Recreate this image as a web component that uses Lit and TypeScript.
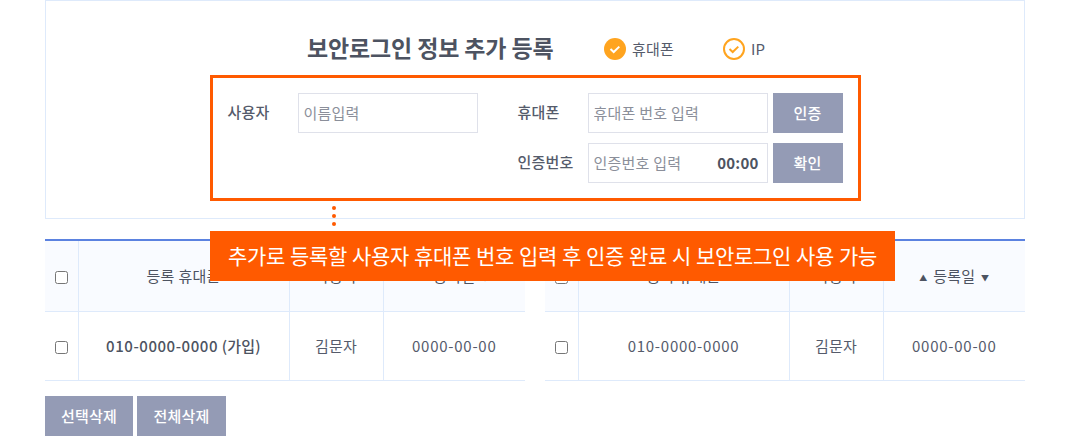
import {LitElement, html, css} from 'lit';
import {customElement} from 'lit/decorators.js';

const check = (filled: boolean) => html`
  <svg class="check" width="22" height="22" viewBox="0 0 22 22">
    <circle cx="11" cy="11" r=${filled ? 11 : 10} fill=${filled ? '#ffa41f' : '#fff'}
      stroke="#ffa41f" stroke-width=${filled ? 0 : 2}></circle>
    <path d="M6.5 11l3.2 3 5.6-5.4" fill="none" stroke=${filled ? '#fff' : '#ffa41f'} stroke-width="2"></path>
  </svg>
`;

@customElement('app-root')
export class AppRoot extends LitElement {
  static styles = css`
    :host {
      display: block;
      position: relative;
      height: 436px;
      overflow: hidden;
      padding: 0 45px;
      box-sizing: border-box;
      background: #fff;
      color: #555b6b;
      font-family: 'Noto Sans CJK KR', 'Noto Sans', sans-serif;
      font-size: 15px;
      letter-spacing: 0.2px;
      word-spacing: 0.24px;
    }

    .panel {
      height: 219px;
      box-sizing: border-box;
      border: 1px solid #deeafb;
      display: flex;
      flex-direction: column;
      align-items: center;
    }

    .head {
      height: 74px;
      box-sizing: border-box;
      padding-top: 22px;
      width: 100%;
      display: flex;
      align-items: center;
    }

    .title {
      margin-left: 261px;
      width: 297px;
      font-size: 23px;
      font-weight: 700;
      letter-spacing: -0.14px;
      word-spacing: 0;
      line-height: 36px;
      color: #4d5361;
      margin-bottom: 4px;
    }

    .option {
      display: flex;
      align-items: center;
      gap: 6px;
      width: 119px;
      line-height: 22px;
      color: #555b6b;
    }

    .form {
      width: 651px;
      height: 126px;
      box-sizing: border-box;
      border: 3px solid #ff5a00;
      padding: 15px;
      display: grid;
      grid-template-columns: 70px 180px 40px 70px 180px 75px;
      grid-auto-rows: 40px;
      row-gap: 10px;
      align-items: center;
    }

    .label {
      font-weight: 500;
      color: #555b6b;
      margin-top: -3px;
    }

    .field {
      height: 40px;
      box-sizing: border-box;
      border: 1px solid #dfe1ea;
      display: flex;
      align-items: center;
      padding: 0 8px 2px 4px;
    }

    .field input {
      flex: 1;
      min-width: 0;
      border: 0;
      padding: 0 0 0 1px;
      outline: none;
      font: inherit;
      letter-spacing: inherit;
      word-spacing: inherit;
      color: inherit;
    }

    .field input::placeholder {
      color: #8b8f9a;
      opacity: 1;
    }

    .timer {
      font-weight: 700;
      letter-spacing: 0.2px;
      color: #4d5361;
    }

    button {
      border: 0;
      padding: 0 0 2px;
      height: 40px;
      background: #949bb5;
      color: #fff;
      font: inherit;
      font-weight: 500;
      letter-spacing: inherit;
    }

    .form button {
      width: 70px;
      margin-left: 5px;
    }

    .spacer {
      grid-column: 1 / span 3;
    }

    .tables {
      margin-top: 20px;
      display: grid;
      grid-template-columns: 480px 480px;
      column-gap: 20px;
      height: 142px;
      position: relative;
    }

    table {
      width: 480px;
      border-collapse: collapse;
      table-layout: fixed;
      border-top: 2px solid #5b82e0;
    }

    th,
    td {
      padding: 0 0 2px;
      text-align: center;
      font-weight: 400;
      border-left: 1px solid #deeafb;
      border-bottom: 1px solid #deeafb;
    }

    th:first-child,
    td:first-child {
      border-left: 0;
    }

    th {
      height: 68px;
      background: #f9fbff;
      color: #4d5361;
    }

    td {
      height: 66px;
    }

    td.phone-bold {
      font-weight: 500;
      color: #4d5361;
    }

    .num {
      letter-spacing: 0.75px;
    }

    td.phone-bold .num {
      letter-spacing: 0.55px;
    }

    input[type='checkbox'] {
      display: block;
      margin: 4px auto 0;
      width: 13px;
      height: 13px;
    }

    .sort {
      font-size: 8px;
      vertical-align: 1px;
      margin: 0 2px;
    }

    .actions {
      margin-top: 15px;
      display: flex;
      gap: 4px;
    }

    .actions button {
      width: 88px;
    }

    .actions button + button {
      width: 89px;
    }

    .callout {
      position: absolute;
      left: 210px;
      top: 231px;
      width: 685px;
      height: 50px;
      box-sizing: border-box;
      padding-left: 18px;
      background: #ff5a00;
      color: #fff;
      font-size: 21px;
      letter-spacing: -0.32px;
      word-spacing: 0.62px;
      line-height: 48px;
      white-space: nowrap;
    }

    .dots {
      position: absolute;
      left: 332px;
      top: 206px;
      display: flex;
      flex-direction: column;
      gap: 4px;
    }

    .dots i {
      width: 4px;
      height: 4px;
      border-radius: 50%;
      background: #ff5a00;
    }
  `;

  private table(phone: string, suffix: string, bold: boolean) {
    return html`
      <table>
        <colgroup>
          <col style="width:33px" />
          <col style="width:211px" />
          <col style="width:94px" />
          <col style="width:142px" />
        </colgroup>
        <tr>
          <th><input type="checkbox" /></th>
          <th>등록 휴대폰</th>
          <th>사용자</th>
          <th><span class="sort">▲</span> 등록일 <span class="sort">▼</span></th>
        </tr>
        <tr>
          <td><input type="checkbox" /></td>
          <td class=${bold ? 'phone-bold' : ''}><span class="num">${phone}</span>${suffix}</td>
          <td>김문자</td>
          <td><span class="num">0000-00-00</span></td>
        </tr>
      </table>
    `;
  }

  render() {
    return html`
      <section class="panel">
        <div class="head">
          <div class="title">보안로그인 정보 추가 등록</div>
          <div class="option">${check(true)}휴대폰</div>
          <div class="option">${check(false)}IP</div>
        </div>
        <div class="form">
          <span class="label">사용자</span>
          <div class="field"><input placeholder="이름입력" /></div>
          <span></span>
          <span class="label">휴대폰</span>
          <div class="field"><input placeholder="휴대폰 번호 입력" /></div>
          <button>인증</button>
          <span class="spacer"></span>
          <span class="label">인증번호</span>
          <div class="field">
            <input placeholder="인증번호 입력" />
            <span class="timer">00:00</span>
          </div>
          <button>확인</button>
        </div>
      </section>

      <div class="tables">
        ${this.table('010-0000-0000', ' (가입)', true)}
        ${this.table('010-0000-0000', '', false)}
      </div>

      <div class="actions">
        <button>선택삭제</button>
        <button>전체삭제</button>
      </div>

      <div class="dots"><i></i><i></i><i></i></div>
      <div class="callout">추가로 등록할 사용자 휴대폰 번호 입력 후 인증 완료 시 보안로그인 사용 가능</div>
    `;
  }
}
